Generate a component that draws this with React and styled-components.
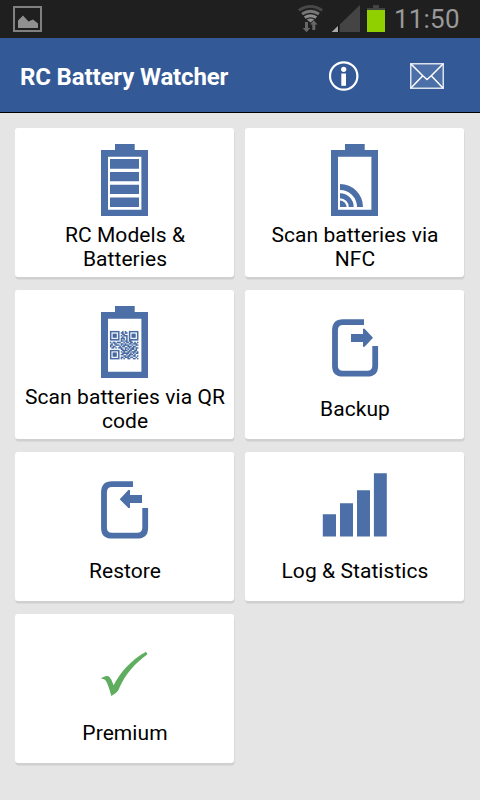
import React from "react";
import styled, { createGlobalStyle } from "styled-components";

const BLUE = "#4b6fa6";

const qrRows = [
  "111111100101001111111",
  "100000101101101000001",
  "101110100110001011101",
  "101110101011101011101",
  "101110100100101011101",
  "100000101110101000001",
  "111111101010101111111",
  "000000001101101100000",
  "101101110010110110101",
  "010110001101001101110",
  "110011101011110010011",
  "101100010110011101100",
  "011010111001101011011",
  "000000001101010111010",
  "111111100111101100110",
  "100000101010011011101",
  "101110100111110101011",
  "101110101100101110100",
  "101110100011011001101",
  "100000101101110110010",
  "111111101010011001101",
];

const qrPath = qrRows
  .map((row, y) =>
    row
      .split("")
      .map((bit, x) => (bit === "1" ? `M${x} ${y}h1v1h-1z` : ""))
      .join("")
  )
  .join("");

const GlobalStyle = createGlobalStyle`
  body {
    margin: 0;
    background: #e5e5e5;
    font-family: Roboto, "Liberation Sans", sans-serif;
  }
`;

const Battery = ({ children }) => (
  <Icon viewBox="0 0 73 72">
    <path
      fill={BLUE}
      fillRule="evenodd"
      d="M27 0h19.7v6H60v66H13V6h14zM20 12.8v53h33.4v-53z"
    />
    {children}
  </Icon>
);

const ModelsIcon = () => (
  <Battery>
    <path fill={BLUE} d="M22 15h29v9.7H22zM22 28h29v9.3H22zM22 40.8h29V50H22zM22 53.5h29V63H22z" />
  </Battery>
);

const NfcIcon = () => (
  <Battery>
    <g fill="none" stroke={BLUE}>
      <path strokeWidth="6" d="M22 43a20 20 0 0 1 20 20" />
      <path strokeWidth="5" d="M22 51.8a11.2 11.2 0 0 1 11.2 11.2" />
    </g>
    <path fill={BLUE} d="M22 56.5a6.5 6.5 0 0 1 6.5 6.5H22z" />
  </Battery>
);

const QrIcon = () => (
  <Battery>
    <path
      fill={BLUE}
      stroke={BLUE}
      strokeWidth="0.12"
      transform="translate(22 25) scale(1.35)"
      d={qrPath}
    />
  </Battery>
);

const BackupIcon = () => (
  <Icon viewBox="0 0 73 72">
    <path
      fill="none"
      stroke={BLUE}
      strokeWidth="5.8"
      d="M46 16.2H25Q17 16.2 17 24.5V60Q17 67.7 25 67.7H49Q57.2 67.7 57.2 60V40"
    />
    <path fill={BLUE} d="M33 28h12v-5.3h1.6L55 31.8l-8.4 9H45V36H33z" />
  </Icon>
);

const RestoreIcon = () => (
  <Icon viewBox="0 0 73 72">
    <path
      fill="none"
      stroke={BLUE}
      strokeWidth="5.8"
      d="M45 16.2H24Q16 16.2 16 24.5V60Q16 67.7 24 67.7H49Q57.2 67.7 57.2 60V40"
    />
    <path fill={BLUE} d="M54 27H42v-5h-1.6l-8.7 9.2 8.7 8.9H42V35h12z" />
  </Icon>
);

const StatsIcon = () => (
  <Icon viewBox="0 0 73 72">
    <path
      fill={BLUE}
      d="M4.8 46.2H18v22.3H4.8zM22 35.2h13v33.3H22zM39 22.2h13v46.3H39zM55.9 5.2h12.9v63.3H55.9z"
    />
  </Icon>
);

const CheckIcon = () => (
  <Icon viewBox="0 0 73 72">
    <path
      fill="#5fae60"
      d="M13 48.7C15 46.5 18 45.6 19.7 46C22.7 47 24.2 51.5 25.7 55.3C31 44 43 30 58 21.8L59.5 24.2C47 33 37 45 31.5 57.5C30.5 61 29 62.5 23.3 66C21.5 59 19 51 16.5 49.5C15.5 48.8 14.5 48.6 13 48.7z"
    />
  </Icon>
);

const tiles = [
  { label: "RC Models & Batteries", TileIcon: ModelsIcon },
  { label: "Scan batteries via NFC", TileIcon: NfcIcon },
  { label: "Scan batteries via QR code", TileIcon: QrIcon },
  { label: "Backup", TileIcon: BackupIcon },
  { label: "Restore", TileIcon: RestoreIcon },
  { label: "Log & Statistics", TileIcon: StatsIcon },
  { label: "Premium", TileIcon: CheckIcon },
];

const StatusIcons = () => (
  <svg width="88" height="38" viewBox="298 0 88 38">
    <g fill="none" strokeWidth="2.8">
      <path stroke="#484848" d="M298.8 10.3q11.7-7.7 23.4 0" />
      <path stroke="#777" d="M302 14q8.5-5.5 17 0" />
      <path stroke="#8c8c8c" d="M304.7 17.5q5.8-3.5 11.6 0" />
    </g>
    <path fill="#8c8c8c" d="M306.8 19.5q3.7-2.2 7.4 0l-3.7 3z" />
    <path
      fill="#666"
      d="M305 22h3v6h2.3l-3.8 4.3-3.8-4.3h2.3zM312.3 30h3v-5.5h2.3l-3.8-4.3-3.8 4.3h2.3z"
    />
    <path fill="#444" d="M360 5v27h-28z" />
    <path fill="#aaa" d="M338 26v6h-6.3z" />
    <path fill="#111" d="M338 25.7l1.5-1.5V32H338z" />
    <path fill="#444" d="M373 5h6v3h6v2h-18V8h6z" />
    <path fill="#91d000" d="M367 10h18v22h-18z" />
  </svg>
);

const App = () => {
  return (
    <>
      <GlobalStyle />
      <StatusBar>
        <svg width="29" height="26" viewBox="0 0 29 26">
          <rect x="1" y="1" width="27" height="24" fill="none" stroke="#808080" strokeWidth="2" />
          <path fill="#909090" d="M5 22v-7.5l5-5 5.5 6 4.500-2 5 4V22z" />
        </svg>
        <StatusRight>
          <StatusIcons />
          <Clock>11:50</Clock>
        </StatusRight>
      </StatusBar>
      <Header>
        <Title>RC Battery Watcher</Title>
        <Actions>
          <svg width="30" height="30" viewBox="0 0 30 30">
            <circle cx="14.7" cy="15" r="13.7" fill="none" stroke="#fff" strokeWidth="2.2" />
            <circle cx="14.7" cy="8.3" r="2.6" fill="#fff" />
            <path fill="#fff" d="M12.3 12.5H17v12.3h-4.7z" />
          </svg>
          <svg width="34" height="26" viewBox="0 0 34 26">
            <rect x=".75" y=".75" width="32.5" height="24.5" fill="#4b6fa6" />
            <g fill="none" stroke="#fff" strokeWidth="1.5">
              <rect x=".75" y=".75" width="32.5" height="24.5" stroke="#dbe2ee" />
              <path d="M1 1l11.5 11.5 4.5 4 4.5-4L33 1M1 25l11.5-12M33 25L21.5 13" />
            </g>
          </svg>
        </Actions>
      </Header>
      <Grid>
        {tiles.map(({ label, TileIcon }) => (
          <Tile key={label}>
            <TileIcon />
            <Label>{label}</Label>
          </Tile>
        ))}
      </Grid>
    </>
  );
};

const StatusBar = styled.div`
  height: 38px;
  padding: 0 20px 0 13px;
  display: flex;
  align-items: center;
  justify-content: space-between;
  background: #1f1f1f;
`;

const StatusRight = styled.div`
  display: flex;
  align-items: center;
`;

const Clock = styled.span`
  width: 66px;
  margin-left: 8px;
  font-size: 26px;
  line-height: 38px;
  letter-spacing: 0.2px;
  white-space: nowrap;
  color: #999;
`;

const Header = styled.header`
  height: 74px;
  padding: 0 36px 0 20px;
  display: flex;
  align-items: center;
  justify-content: space-between;
  background: #335997;
  border-bottom: 1px solid #000;
`;

const Title = styled.h1`
  margin: 0;
  padding-top: 4px;
  font-size: 24px;
  font-weight: 700;
  letter-spacing: -0.14px;
  white-space: nowrap;
  color: #fff;
`;

const Actions = styled.div`
  display: flex;
  align-items: center;
  gap: 51px;
  padding-top: 2px;
`;

const Grid = styled.main`
  padding: 15px;
  display: grid;
  grid-template-columns: 219px 219px;
  grid-auto-rows: 149px;
  gap: 13px 11px;
`;

const Tile = styled.button`
  border: none;
  padding: 16px 8px 0;
  display: flex;
  flex-direction: column;
  align-items: center;
  justify-content: flex-start;
  border-radius: 3px;
  background: #fff;
  box-shadow: 0.5px 2.5px 0 #d0d0d0;
  font: inherit;
  color: #000;
`;

const Icon = styled.svg`
  flex: none;
  width: 73px;
  height: 72px;
`;

const Label = styled.span`
  height: 48px;
  margin-top: 7px;
  padding-left: 1px;
  display: flex;
  align-items: center;
  font-size: 21px;
  line-height: 24px;
  letter-spacing: 0.07px;
  text-align: center;
`;

export default App;
